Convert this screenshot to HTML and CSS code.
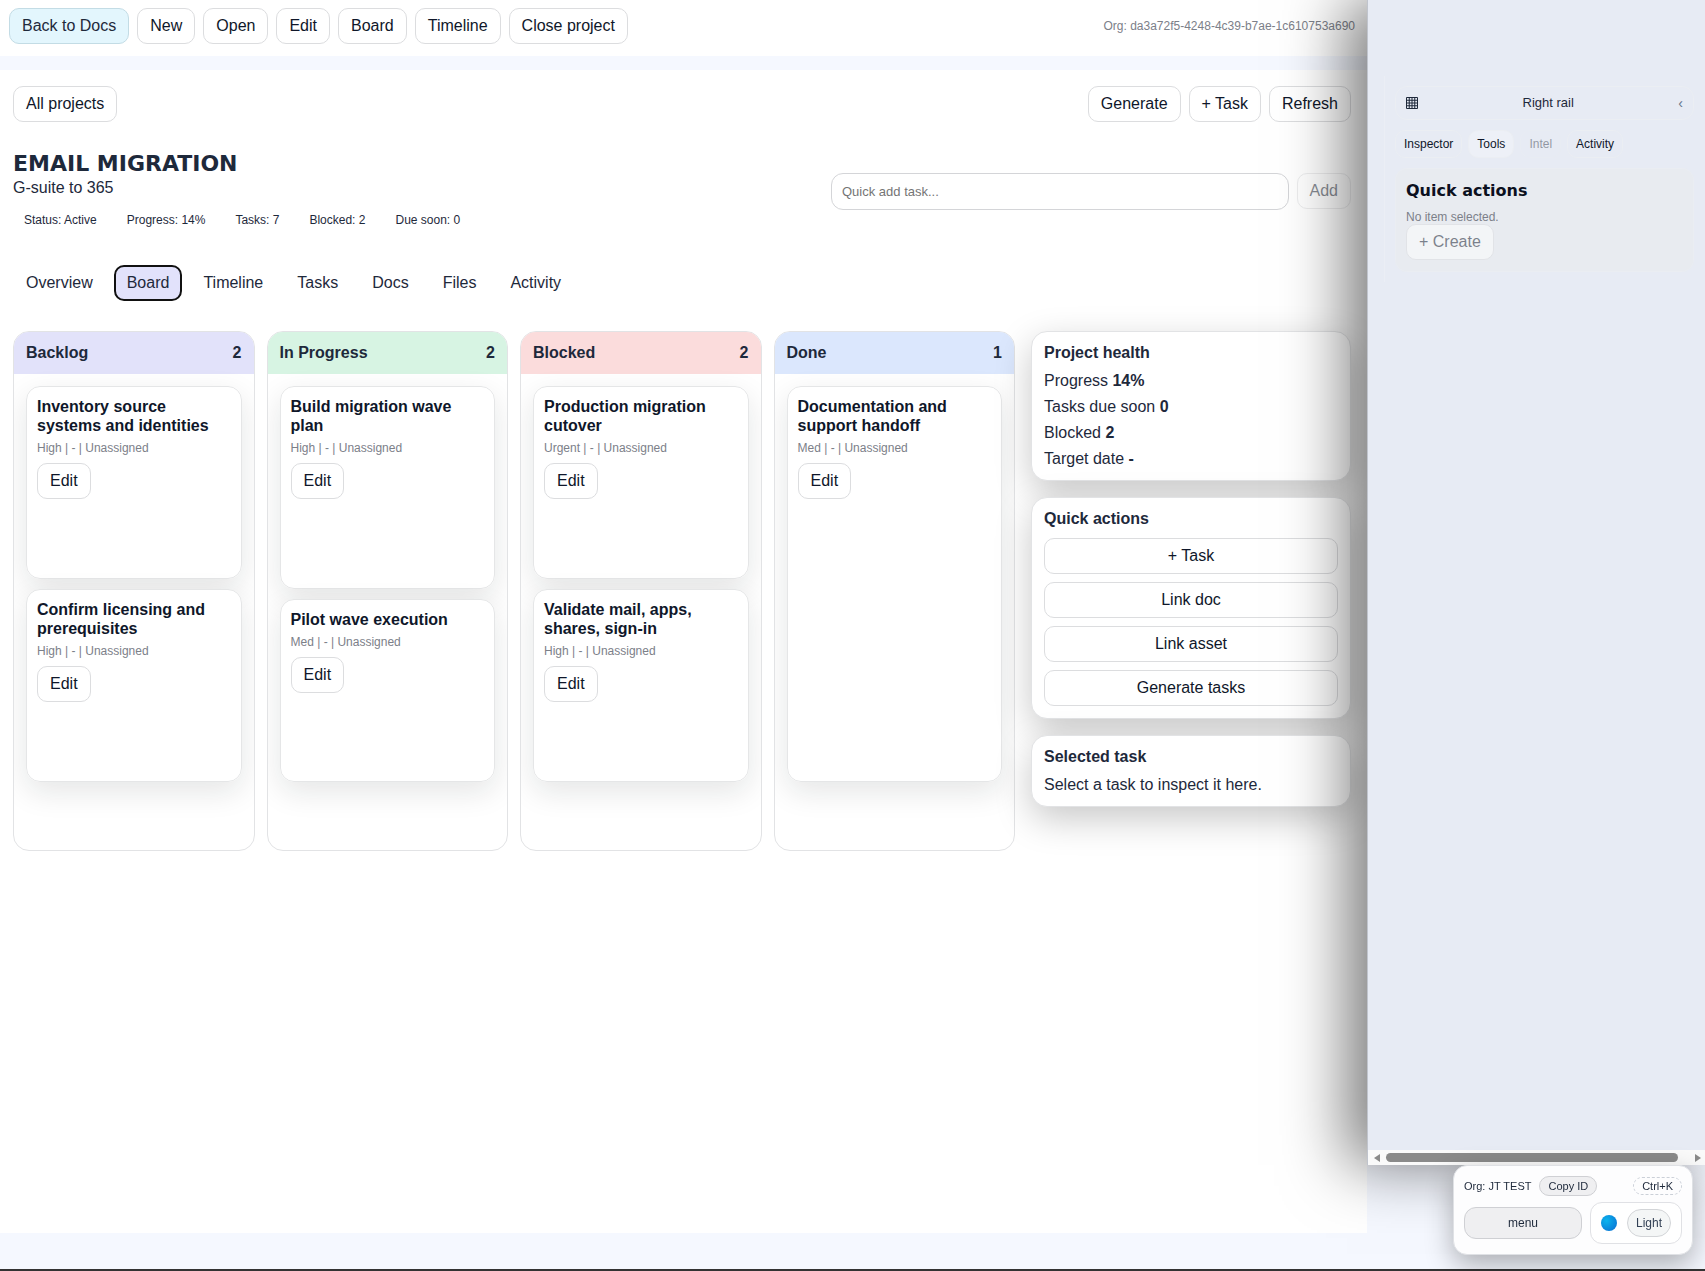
FILE: index.html
```html
<!DOCTYPE html>
<html lang="en">
<head>
<meta charset="utf-8">
<title>Email Migration</title>
<link rel="stylesheet" href="styles.css">
</head>
<body>
<div class="page">
  <div class="workspace">
    <header class="topbar">
      <nav class="row" aria-label="Project">
        <button class="btn btn-docs">Back to Docs</button>
        <button class="btn">New</button>
        <button class="btn">Open</button>
        <button class="btn">Edit</button>
        <button class="btn">Board</button>
        <button class="btn">Timeline</button>
        <button class="btn">Close project</button>
      </nav>
      <span class="muted">Org: da3a72f5-4248-4c39-b7ae-1c610753a690</span>
    </header>

    <main class="project">
      <div class="row between">
        <button class="btn">All projects</button>
        <div class="row">
          <button class="btn">Generate</button>
          <button class="btn">+ Task</button>
          <button class="btn">Refresh</button>
        </div>
      </div>

      <div class="headline">
        <div>
          <h1 class="title">EMAIL MIGRATION</h1>
          <p class="subtitle">G-suite to 365</p>
          <ul class="stats">
            <li>Status: Active</li>
            <li>Progress: 14%</li>
            <li>Tasks: 7</li>
            <li>Blocked: 2</li>
            <li>Due soon: 0</li>
          </ul>
        </div>
        <form class="row quick-add">
          <input class="field" type="text" placeholder="Quick add task..." aria-label="Quick add task">
          <button class="btn" type="button" disabled>Add</button>
        </form>
      </div>

      <nav class="tabs" aria-label="Views">
        <button class="tab">Overview</button>
        <button class="tab tab-active">Board</button>
        <button class="tab">Timeline</button>
        <button class="tab">Tasks</button>
        <button class="tab">Docs</button>
        <button class="tab">Files</button>
        <button class="tab">Activity</button>
      </nav>

      <div class="content">
        <div class="board">
          <section class="column">
            <h2 class="column-head backlog"><span>Backlog</span><span>2</span></h2>
            <div class="cards">
              <article class="card"><h3>Inventory source systems and identities</h3><p class="muted">High | - | Unassigned</p><button class="btn">Edit</button></article>
              <article class="card"><h3>Confirm licensing and prerequisites</h3><p class="muted">High | - | Unassigned</p><button class="btn">Edit</button></article>
            </div>
          </section>
          <section class="column">
            <h2 class="column-head progress"><span>In Progress</span><span>2</span></h2>
            <div class="cards">
              <article class="card"><h3>Build migration wave plan</h3><p class="muted">High | - | Unassigned</p><button class="btn">Edit</button></article>
              <article class="card"><h3>Pilot wave execution</h3><p class="muted">Med | - | Unassigned</p><button class="btn">Edit</button></article>
            </div>
          </section>
          <section class="column">
            <h2 class="column-head blocked"><span>Blocked</span><span>2</span></h2>
            <div class="cards">
              <article class="card"><h3>Production migration cutover</h3><p class="muted">Urgent | - | Unassigned</p><button class="btn">Edit</button></article>
              <article class="card"><h3>Validate mail, apps, shares, sign-in</h3><p class="muted">High | - | Unassigned</p><button class="btn">Edit</button></article>
            </div>
          </section>
          <section class="column">
            <h2 class="column-head done"><span>Done</span><span>1</span></h2>
            <div class="cards">
              <article class="card"><h3>Documentation and support handoff</h3><p class="muted">Med | - | Unassigned</p><button class="btn">Edit</button></article>
            </div>
          </section>
        </div>

        <aside class="side">
          <section class="panel">
            <h2>Project health</h2>
            <p>Progress <strong>14%</strong></p>
            <p>Tasks due soon <strong>0</strong></p>
            <p>Blocked <strong>2</strong></p>
            <p>Target date <strong>-</strong></p>
          </section>
          <section class="panel">
            <h2>Quick actions</h2>
            <button class="btn">+ Task</button>
            <button class="btn">Link doc</button>
            <button class="btn">Link asset</button>
            <button class="btn">Generate tasks</button>
          </section>
          <section class="panel">
            <h2>Selected task</h2>
            <p>Select a task to inspect it here.</p>
          </section>
        </aside>
      </div>
    </main>
  </div>

  <aside class="rail">
    <div class="rail-body">
      <header class="rail-head">
        <svg width="12" height="12" viewBox="0 0 12 12" aria-hidden="true"><path d="M.5.5h11v11H.5zM3.25 0v12M6 0v12M8.75 0v12M0 3.25h12M0 6h12M0 8.75h12" fill="none" stroke="#1e293b"/></svg>
        <span>Right rail</span>
        <button class="collapse" aria-label="Collapse rail">‹</button>
      </header>
      <nav class="rail-tabs" aria-label="Rail">
        <button class="rail-tab">Inspector</button>
        <button class="rail-tab rail-tab-active">Tools</button>
        <button class="rail-tab" disabled>Intel</button>
        <button class="rail-tab">Activity</button>
      </nav>
      <section class="rail-panel">
        <h2>Quick actions</h2>
        <p class="muted">No item selected.</p>
        <button class="btn" disabled>+ Create</button>
      </section>
    </div>
    <div class="scrollbar" aria-hidden="true">
      <svg width="6" height="8" viewBox="0 0 6 8"><path d="M6 0v8L0 4z" fill="#8a8a8a"/></svg>
      <span class="thumb"></span>
      <svg width="6" height="8" viewBox="0 0 6 8"><path d="M0 0v8l6-4z" fill="#8a8a8a"/></svg>
    </div>
  </aside>
</div>

<div class="dock">
  <div class="dock-row">
    <span>Org: JT TEST</span>
    <button class="pill">Copy ID</button>
    <kbd class="shortcut">Ctrl+K</kbd>
  </div>
  <div class="dock-row">
    <button class="menu">menu</button>
    <div class="theme"><span class="dot"></span><button class="light">Light</button></div>
  </div>
</div>
</body>
</html>
```
FILE: styles.css
```css
* { box-sizing: border-box; }
h1, h2, h3, p, ul { margin: 0; padding: 0; }
body {
  margin: 0;
  background: #f5f8ff;
  color: #1e293b;
  font: 16px/18px "Liberation Sans", Arial, sans-serif;
}
button { font: inherit; color: inherit; }
.page {
  display: grid;
  grid-template-columns: minmax(0, 1fr) 338px;
  min-height: 100vh;
  border-bottom: 2px solid #333;
  overflow: hidden;
}
.workspace { display: flex; flex-direction: column; gap: 14px; padding-bottom: 36px; }
.row { display: flex; align-items: center; gap: 8px; }
.between { justify-content: space-between; }
.muted { font-size: 12px; line-height: 14px; color: #7c8089; }
.btn {
  height: 36px;
  padding: 0 12px;
  border: 1px solid #dcdddf;
  border-radius: 10px;
  background: #fff;
  color: #0f172a;
  white-space: nowrap;
}
.btn:disabled { opacity: .5; }
.btn-docs { background: #e3f6fd; border-color: #c3dce5; color: #1e293b; }
.topbar {
  display: flex;
  justify-content: space-between;
  padding: 8px 12px 12px 9px;
  background: #fff;
}
.topbar .muted { align-self: center; }

.project { flex: 1; padding: 16px 16px 24px 13px; background: #fff; }
.headline {
  display: grid;
  grid-template-columns: minmax(0, 1fr) 520px;
  align-items: center;
  margin-top: 30px;
}
.title { font: bold 22px/24px "DejaVu Sans", sans-serif; }
.subtitle { margin-top: 2px; line-height: 20px; }
.stats {
  display: flex;
  gap: 30px;
  margin-top: 12px;
  padding: 0 11px;
  list-style: none;
  font-size: 12px;
  line-height: 20px;
}
.quick-add { align-items: flex-start; }
.field {
  flex: 1;
  height: 37px;
  padding: 0 10px;
  border: 1px solid #d4d5d8;
  border-radius: 12px;
  background: #fff;
  font: 13px/16px "Liberation Sans", Arial, sans-serif;
}
.field::placeholder { color: #757575; }
.tabs { display: flex; gap: 8px; margin-top: 35px; }
.tab {
  height: 36px;
  padding: 0 11px;
  border: 2px solid transparent;
  border-radius: 10px;
  background: none;
}
.tab-active { border-color: #111; background: #e2e2fb; }

.content {
  display: grid;
  grid-template-columns: minmax(0, 1fr) 320px;
  gap: 16px;
  align-items: start;
  margin-top: 30px;
}
.board { display: grid; grid-template-columns: repeat(4, minmax(0, 1fr)); gap: 12px; }
.column {
  display: flex;
  flex-direction: column;
  min-height: 520px;
  border: 1px solid #e2e3e5;
  border-radius: 16px;
  overflow: hidden;
}
.column-head {
  display: flex;
  justify-content: space-between;
  padding: 11px 12px 12px;
  font-size: 16px;
  line-height: 19px;
}
.backlog { background: #e2e2fa; }
.progress { background: #d7f4e3; }
.blocked { background: #fbdcdc; }
.done { background: #dbe7fd; }
.cards {
  display: grid;
  gap: 10px;
  min-height: 420px;
  padding: 12px;
}
.card {
  padding: 10px;
  border: 1px solid #e5e6e7;
  border-radius: 14px;
  background: #fffffff2;
  box-shadow: 0 10px 30px #0f1f1a1c;
}
.card h3 { font-size: 16px; line-height: 19px; color: #0f172a; }
.card .muted { margin: 6px 0 8px; }
.side { display: grid; gap: 16px; }
.panel {
  display: grid;
  gap: 8px;
  padding: 12px;
  border: 1px solid #e2e3e5;
  border-radius: 16px;
  background: #fff;
  box-shadow: 0 12px 36px #00000038;
}
.panel h2 { font-size: 16px; line-height: 18px; margin-bottom: 2px; }

.rail {
  position: relative;
  display: flex;
  flex-direction: column;
  justify-content: space-between;
  margin-bottom: 104px;
  border-left: 1px solid #c0c4cd;
  background: #e7ebf4;
  box-shadow: -20px 0 60px #00000085;
}
.rail-body {
  margin: 76px 0 0 16px;
  padding: 10px 11px 10px 10px;
  border-left: 1px solid #ebeef5;
}
.rail-head {
  display: flex;
  align-items: center;
  justify-content: space-between;
  height: 34px;
  padding: 0 10px;
  border: 1px solid #ebeef3;
  border-radius: 12px;
  font-size: 13px;
}
.collapse { padding: 0; border: 0; background: none; color: #64748b; font-size: 14px; }
.rail-tabs { display: flex; gap: 6px; margin: 10px 0; }
.rail-tab {
  height: 28px;
  padding: 0 8px;
  border: 1px solid #ebeef3;
  border-radius: 10px;
  background: none;
  color: #0f172a;
  font-size: 12px;
}
.rail-tab:disabled { opacity: .4; }
.rail-tab-active { background: #edf0f7; }
.rail-panel {
  padding: 11px 10px;
  border: 1px solid #eaedf2;
  border-radius: 12px;
  background: #e8ebf0;
}
.rail-panel h2 { font: bold 16px/22px "DejaVu Sans", sans-serif; color: #0b1020; }
.rail-panel .muted { margin-top: 8px; }
.rail-panel .btn { display: block; }
.scrollbar {
  display: flex;
  align-items: center;
  gap: 6px;
  height: 15px;
  padding: 0 4px 0 6px;
  background: #fafafa;
}
.thumb { flex: 1; height: 9px; margin-right: 11px; border-radius: 5px; background: #8a8a8a; }

.dock {
  position: fixed;
  right: 12px;
  bottom: 16px;
  display: grid;
  gap: 6px;
  width: 240px;
  padding: 10px;
  border: 1px solid #dfe1e5;
  border-radius: 14px;
  background: #fdfdfe;
  box-shadow: 0 10px 28px #0000004d;
  font-size: 11px;
  line-height: 14px;
}
.dock-row { display: flex; align-items: center; gap: 8px; }
.pill {
  height: 20px;
  padding: 0 8px;
  border: 1px solid #cfd0d4;
  border-radius: 10px;
  background: #efeff1;
}
.shortcut {
  margin-left: auto;
  padding: 1px 8px;
  border: 1px dashed #cbd0d8;
  border-radius: 10px;
  font: inherit;
}
.menu {
  flex: 1;
  height: 32px;
  border: 1px solid #cfd0d4;
  border-radius: 12px;
  background: #efeff1;
  font-size: 12px;
}
.theme {
  display: flex;
  align-items: center;
  gap: 10px;
  height: 42px;
  padding: 0 10px;
  border: 1px solid #e0e1e5;
  border-radius: 12px;
  background: #fff;
}
.dot {
  width: 16px;
  height: 16px;
  border-radius: 8px;
  background: radial-gradient(circle at 35% 35%, #0ab4ee, #0a6bd0);
}
.light {
  height: 28px;
  padding: 0 8px;
  border: 1px solid #d3d5d8;
  border-radius: 14px;
  background: #f4f6f6;
  color: #334155;
  font-size: 12px;
}
```
